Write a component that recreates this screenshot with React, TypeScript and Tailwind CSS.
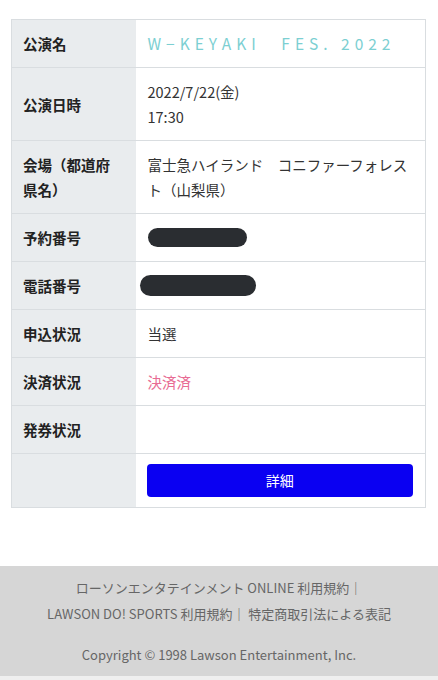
const FONT = { fontFamily: '"Noto Sans CJK JP", "Noto Sans", sans-serif' };

type Row = { label: React.ReactNode; value: React.ReactNode };

const ROWS: Row[] = [
  {
    label: "公演名",
    value: (
      <span className="text-[15.5px] leading-none tracking-[5px] text-[#7ccfd2]">W−KEYAKI　FES. 2022</span>
    ),
  },
  {
    label: "公演日時",
    value: (
      <>
        2022/7/22(金)
        <br />
        17:30
      </>
    ),
  },
  {
    label: (
      <>
        会場（都道府
        <br />
        県名）
      </>
    ),
    value: "富士急ハイランド　コニファーフォレスト（山梨県）",
  },
  {
    label: "予約番号",
    value: <div className="h-[19px] w-[99px] rounded-full bg-[#2a2d31]" />,
  },
  {
    label: "電話番号",
    value: <div className="-ml-[8px] h-[21px] w-[116px] rounded-full bg-[#2a2d31]" />,
  },
  { label: "申込状況", value: "当選" },
  { label: "決済状況", value: <span className="text-[#e86c94]">決済済</span> },
  { label: "発券状況", value: <span>&nbsp;</span> },
];

export default function App() {
  return (
    <div className="min-h-[680px] bg-white text-[#333]" style={FONT}>
      <div className="px-[11px] pt-[19px]">
        <table className="w-[415px] border-collapse border border-[#d9dde0]">
          <tbody>
            {ROWS.map((r, i) => (
              <tr key={i} className="border-b border-[#d9dde0]">
                <th className="w-[124px] bg-[#e9ecee] py-[11px] pl-[11px] pr-2 text-left align-middle text-[14.5px] font-bold leading-[25px] text-[#222]">
                  {r.label}
                </th>
                <td className="bg-white py-[11px] pl-[12px] pr-[12px] align-middle text-[14.5px] leading-[25px] text-[#333]">
                  {r.value}
                </td>
              </tr>
            ))}
            <tr>
              <th className="w-[124px] bg-[#e9ecee]" />
              <td className="bg-white pb-[10px] pl-[11px] pr-[12px] pt-[10px]">
                <button className="flex h-[33px] w-full items-center justify-center rounded-[4px] bg-[#0a00f2] text-[14px] text-white">
                  詳細
                </button>
              </td>
            </tr>
          </tbody>
        </table>
      </div>

      <div className="mt-[58px] bg-[#d6d6d6] pb-[8px] pt-[9px] text-center text-[13px] leading-[26px] text-[#666]">
        <p>ローソンエンタテインメント ONLINE 利用規約｜</p>
        <p>LAWSON DO! SPORTS 利用規約｜ 特定商取引法による表記</p>
        <p className="mt-[15px]">Copyright © 1998 Lawson Entertainment, Inc.</p>
      </div>
      <div className="h-[5px] bg-[#efefef]" />
    </div>
  );
}
